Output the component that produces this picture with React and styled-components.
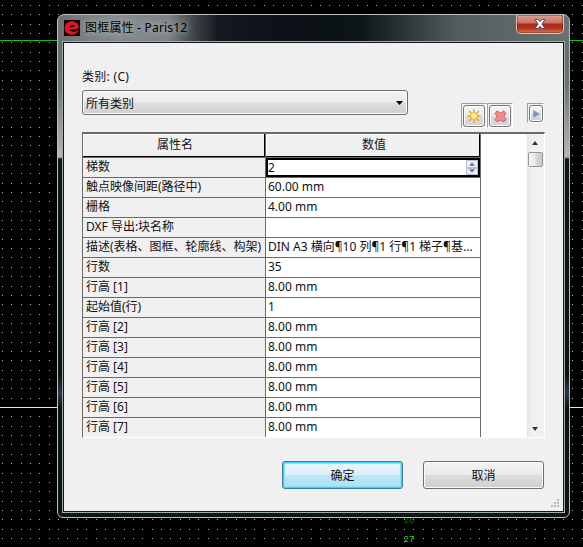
import React, { useState } from 'react';
import styled, { createGlobalStyle, css } from 'styled-components';

const GlobalStyle = createGlobalStyle`
  * {
    box-sizing: border-box;
  }

  body {
    margin: 0;
    background: #000;
    overflow: hidden;
  }

  body, button, input {
    font-family: "Noto Sans", "Noto Sans CJK SC", sans-serif;
    font-size: 12px;
    color: #111;
  }
`;

const Desktop = styled.div`
  position: relative;
  width: 583px;
  height: 547px;
  background: #000;
  overflow: hidden;
`;

const Grid = styled.svg`
  display: block;
`;

const Dialog = styled.section`
  position: absolute;
  left: 57px;
  top: 14px;
  width: 513px;
  height: 504px;
  display: flex;
  flex-direction: column;
  padding: 0 4px 4px;
  border: 1px solid #b9c0c2;
  border-radius: 7px 7px 6px 6px;
  background:
    linear-gradient(90deg, #6c7273 0, #858b8c 60px, #7e8586 110px, #3b4245 137px, #14191f 160px, #0c1217 220px, #0d1418 300px, #2f373a 350px, #545d5e 400px, #687273 100%) 0 0 / 100% 27px no-repeat,
    linear-gradient(#626869, #6d7374 70px, #b4b7b8 142px, #10171a 144px, #0b1114 360px, #2b3a45 378px, #0b1114 394px, #0d1517) 0 0 / 100% 100%;
`;

const TitleBar = styled.header`
  display: flex;
  align-items: flex-start;
  height: 26px;
  flex: none;
  padding-left: 2px;
`;

const Logo = styled.svg`
  flex: none;
  margin-top: 5px;
`;

const Title = styled.h1`
  flex: 1;
  margin: 0 0 0 5px;
  font-size: 12px;
  font-weight: 400;
  letter-spacing: 0.2px;
  line-height: 26px;
  color: #000;
  text-shadow: 0 0 6px #b5bbbb, 0 0 8px #a5abab;
`;

const CloseButton = styled.button`
  display: flex;
  align-items: center;
  justify-content: center;
  width: 48px;
  height: 19px;
  margin-right: 1px;
  padding: 0 0 1px;
  border: 1px solid #d5c4c2;
  border-top: 0;
  border-radius: 0 0 5px 5px;
  background: linear-gradient(#dba196 0, #c8705f 8px, #a92916 9px, #b23219 13px, #d77b5c 100%);
  box-shadow: inset 0 0 0 1px rgba(110, 25, 15, 0.45);
`;

const Client = styled.main`
  flex: 1;
  min-height: 0;
  display: flex;
  flex-direction: column;
  border: 1px solid #11171a;
  outline: 1px solid #a4abad;
  margin: 1px;
  padding: 24px 19px 0 18px;
  background: #f0f0f0;
`;

const FieldLabel = styled.label`
  height: 20px;
  letter-spacing: 0.3px;
  line-height: 20px;
`;

const FilterRow = styled.div`
  display: flex;
  justify-content: space-between;
  height: 45px;
  padding-top: 3px;
`;

const Combo = styled.button`
  display: flex;
  align-items: center;
  justify-content: space-between;
  width: 326px;
  height: 25px;
  padding: 0 4px 0 3px;
  border: 1px solid #707070;
  border-radius: 3px;
  background: linear-gradient(#f3f3f3, #ebebeb 48%, #dddddd 52%, #cfcfcf);
  box-shadow: inset 0 0 0 1px #fafafa;
`;

const Tools = styled.div`
  display: flex;
  align-items: flex-start;
  padding-top: 13px;
`;

const ToolSlot = styled.div`
  width: ${(p) => (p.$small ? 17 : 26)}px;
  height: ${(p) => (p.$small ? 20 : 25)}px;
  padding: 1px 0 0 1px;
  margin-left: ${(p) => p.$gap || 0}px;
  border: 1px solid #a0a0a0;
  border-right-color: #fff;
  border-bottom-color: #fff;
`;

const ToolButton = styled.button`
  display: flex;
  align-items: center;
  justify-content: center;
  width: ${(p) => (p.$small ? 14 : 22)}px;
  height: ${(p) => (p.$small ? 17 : 22)}px;
  padding: 0;
  border: 1px solid #777;
  border-radius: 3px;
  background: linear-gradient(#f4f4f4, #ebebeb 48%, #dddddd 52%, #d2d2d2);
  box-shadow: inset 0 0 0 1px #fbfbfb;
`;

const ListBox = styled.div`
  display: flex;
  width: 463px;
  height: 306px;
  border: solid #696969;
  border-width: 2px 0 0 1px;
  border-bottom: 1px solid #fff;
  border-right: 1px solid #fff;
  background: #fff;
`;

const Table = styled.div`
  width: 398px;
  height: 303px;
  overflow: hidden;
`;

const TableRow = styled.div`
  display: grid;
  grid-template-columns: 183px 215px;
  height: 20px;
`;

const HeaderRow = styled(TableRow)`
  height: 24px;
`;

const HeaderCell = styled.div`
  padding-left: 2px;
  border: solid #696969;
  border-width: 0 1px 1px 0;
  background: #f0f0f0;
  box-shadow: inset -1px -1px 0 #000, inset 1px 1px 0 #fff;
  text-align: center;
  line-height: 22px;
`;

const cell = css`
  height: 20px;
  padding-left: 3px;
  border: solid #696969;
  border-width: 0 1px 1px 0;
  line-height: 18px;
  white-space: nowrap;
  overflow: hidden;
`;

const NameCell = styled.div`
  ${cell}
  background: #f0f0f0;
`;

const ValueCell = styled.div`
  ${cell}
  padding-left: ${(p) => (p.$editing ? 0 : 2)}px;
  background: #fff;
`;

const Editor = styled.div`
  display: flex;
  align-items: center;
  height: 19px;
  border: 2px solid #000;
  background: #fff;
`;

const EditorInput = styled.input`
  flex: 1;
  min-width: 0;
  height: 15px;
  padding: 0 0 1px;
  border: 0;
  outline: 0;
  background: none;
`;

const Spinner = styled.div`
  display: flex;
  flex-direction: column;
  width: 12px;
  height: 15px;
`;

const SpinButton = styled.button`
  flex: 1;
  display: flex;
  align-items: center;
  justify-content: center;
  padding: 0;
  border: 1px solid #b8c0d4;
  background: #edf0f8;
`;

const ScrollBar = styled.div`
  display: flex;
  flex-direction: column;
  align-items: center;
  justify-content: space-between;
  width: 17px;
  margin-left: auto;
  background: linear-gradient(90deg, #e6e6e6, #f0f0f0 30%, #f2f2f2);
`;

const ScrollArrow = styled.svg`
  flex: none;
  display: block;
`;

const Track = styled.div`
  flex: 1;
  width: 15px;
`;

const Thumb = styled.div`
  height: 15px;
  margin-top: 1px;
  border: 1px solid #979797;
  border-radius: 2px;
  background: linear-gradient(90deg, #f5f5f5, #e9e9eb 48%, #d9dadc 52%, #c8c8cb);
`;

const Footer = styled.footer`
  display: flex;
  justify-content: flex-end;
  gap: 20px;
  padding-top: 23px;
`;

const PushButton = styled.button`
  width: 121px;
  height: 28px;
  padding: 0 0 1px;
  border: 1px solid ${(p) => (p.$primary ? '#3c7fa1' : '#707070')};
  border-radius: 3px;
  background: ${(p) =>
    p.$primary
      ? 'linear-gradient(#e9f5fb, #dcf0fa 48%, #c2e4f6 52%, #ace0f8)'
      : 'linear-gradient(#f3f3f3, #ebebeb 48%, #dddddd 52%, #cfcfcf)'};
  box-shadow: ${(p) =>
    p.$primary ? 'inset 0 0 0 1px #45d0f5, inset 0 0 0 2px #86e0f8' : 'inset 0 0 0 1px #fafafa'};
`;

const SizeGrip = styled.svg`
  align-self: flex-end;
  margin: auto -16px 2px 0;
`;

const properties = [
  { name: '梯数', value: '2', edit: true },
  { name: '触点映像间距(路径中)', value: '60.00 mm' },
  { name: '栅格', value: '4.00 mm' },
  { name: 'DXF 导出:块名称', value: '' },
  { name: '描述(表格、图框、轮廓线、构架)', value: 'DIN A3 横向¶10 列¶1 行¶1 梯子¶基...' },
  { name: '行数', value: '35' },
  { name: '行高 [1]', value: '8.00 mm' },
  { name: '起始值(行)', value: '1' },
  { name: '行高 [2]', value: '8.00 mm' },
  { name: '行高 [3]', value: '8.00 mm' },
  { name: '行高 [4]', value: '8.00 mm' },
  { name: '行高 [5]', value: '8.00 mm' },
  { name: '行高 [6]', value: '8.00 mm' },
  { name: '行高 [7]', value: '8.00 mm' },
];

const STEP = 9.35;

const CanvasGrid = () => {
  const dots = [];
  for (let row = 0; row < 59; row++) {
    for (let col = 0; col < 63; col++) {
      dots.push(
        <rect
          key={`${row}-${col}`}
          x={Math.round(2 + col * STEP)}
          y={Math.round(5 + row * STEP)}
          width="1"
          height="1"
        />
      );
    }
  }

  return (
    <Grid width="583" height="547">
      <g fill="#b4b4b4">{dots}</g>
      <rect y="40" width="583" height="1" fill="#22b822" />
      <rect y="407" width="583" height="1" fill="#e4e4e4" />
      <g fontFamily="Liberation Mono, monospace" fontSize="9">
        <text x="403.5" y="523" fill="#0a6a0a">26</text>
        <text x="403.5" y="542" fill="#22e022">27</text>
      </g>
    </Grid>
  );
};

const Arrow = ({ up, fill = '#333', size = 7 }) => (
  <svg width={size} height="4" viewBox="0 0 7 4">
    <path d={up ? 'M0 4 L3.5 0 L7 4 Z' : 'M0 0 L7 0 L3.5 4 Z'} fill={fill} />
  </svg>
);

const App = () => {
  const [ladders, setLadders] = useState(properties[0].value);

  const step = (delta) => setLadders(String(Number(ladders) + delta));

  return (
    <Desktop>
      <GlobalStyle />
      <CanvasGrid />
      <Dialog>
        <TitleBar>
          <Logo width="16" height="16" viewBox="0 0 16 16">
            <rect width="16" height="16" fill="#1c0507" />
            <ellipse cx="7.8" cy="8" rx="7.2" ry="6.8" fill="#e3142a" />
            <path d="M5.6 7.2 C6.6 5.2 9.4 4.4 10.4 5.4 C10.9 6.4 8.4 7.2 5.6 7.2 Z" fill="#1c0507" />
            <path d="M5.4 9.6 C8.4 9.9 12 9.4 14 8 L15.6 9.6 L13 11 C10.4 12.2 6 12 5.4 9.6 Z" fill="#1c0507" />
          </Logo>
          <Title>图框属性 - Paris12</Title>
          <CloseButton aria-label="关闭">
            <svg width="12" height="10" viewBox="0 0 12 10">
              <path d="M1 0.5 H4.2 L6 2.8 L7.8 0.5 H11 L7.8 5 L11 9.5 H7.8 L6 7.2 L4.2 9.5 H1 L4.2 5 Z" fill="#fff" stroke="#4d4a58" strokeWidth="0.9" />
            </svg>
          </CloseButton>
        </TitleBar>
        <Client>
          <FieldLabel>类别: (C)</FieldLabel>
          <FilterRow>
            <Combo>
              所有类别
              <Arrow fill="#000" />
            </Combo>
            <Tools>
              <ToolSlot>
                <ToolButton aria-label="新建">
                  <svg width="14" height="14" viewBox="0 0 14 14">
                    <path d="M7 0.5 V13.5 M0.5 7 H13.5 M2 2 L12 12 M12 2 L2 12" stroke="#e9a020" strokeWidth="1.3" />
                    <circle cx="7" cy="7" r="3.4" fill="#fff27a" stroke="#f0b030" />
                  </svg>
                </ToolButton>
              </ToolSlot>
              <ToolSlot>
                <ToolButton aria-label="删除">
                  <svg width="13" height="13" viewBox="0 0 13 13">
                    <path d="M3.3 1 L6.5 3.2 L9.7 1 L12 3.3 L9.8 6.5 L12 9.7 L9.7 12 L6.5 9.8 L3.3 12 L1 9.7 L3.2 6.5 L1 3.3 Z" fill="#f48a8a" stroke="#d9545b" />
                  </svg>
                </ToolButton>
              </ToolSlot>
              <ToolSlot $small $gap={14}>
                <ToolButton $small aria-label="更多">
                  <svg width="7" height="8" viewBox="0 0 7 8">
                    <path d="M0.5 0.5 L6.5 4 L0.5 7.5 Z" fill="#7d93c8" stroke="#96a6cf" />
                  </svg>
                </ToolButton>
              </ToolSlot>
            </Tools>
          </FilterRow>
          <ListBox>
            <Table>
              <HeaderRow>
                <HeaderCell>属性名</HeaderCell>
                <HeaderCell>数值</HeaderCell>
              </HeaderRow>
              {properties.map((item) => (
                <TableRow key={item.name}>
                  <NameCell>{item.name}</NameCell>
                  {item.edit ? (
                    <ValueCell $editing>
                      <Editor>
                        <EditorInput value={ladders} onChange={(e) => setLadders(e.target.value)} />
                        <Spinner>
                          <SpinButton onClick={() => step(1)}>
                            <Arrow up size={6} fill="#6776a6" />
                          </SpinButton>
                          <SpinButton onClick={() => step(-1)}>
                            <Arrow size={6} fill="#6776a6" />
                          </SpinButton>
                        </Spinner>
                      </Editor>
                    </ValueCell>
                  ) : (
                    <ValueCell>{item.value}</ValueCell>
                  )}
                </TableRow>
              ))}
            </Table>
            <ScrollBar>
              <ScrollArrow width="17" height="17" viewBox="0 0 17 17">
                <path d="M5 11 L8 7 L11 11 Z" fill="#333" />
              </ScrollArrow>
              <Track>
                <Thumb />
              </Track>
              <ScrollArrow width="17" height="17" viewBox="0 0 17 17">
                <path d="M5 7 L11 7 L8 11 Z" fill="#333" />
              </ScrollArrow>
            </ScrollBar>
          </ListBox>
          <Footer>
            <PushButton $primary>确定</PushButton>
            <PushButton>取消</PushButton>
          </Footer>
          <SizeGrip width="10" height="10">
            <g fill="#b8b8b8">
              <rect x="7" y="0" width="2" height="2" />
              <rect x="4" y="3" width="2" height="2" />
              <rect x="7" y="3" width="2" height="2" />
              <rect x="1" y="6" width="2" height="2" />
              <rect x="4" y="6" width="2" height="2" />
              <rect x="7" y="6" width="2" height="2" />
            </g>
          </SizeGrip>
        </Client>
      </Dialog>
    </Desktop>
  );
};

export default App;
